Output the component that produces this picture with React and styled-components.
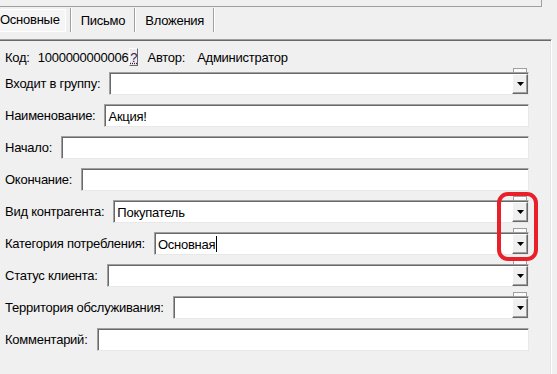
import React from 'react';
import styled, { createGlobalStyle } from 'styled-components';

const GlobalStyle = createGlobalStyle`
  body {
    margin: 0;
    background: #f0f0f0;
    font-family: "Liberation Sans", Arial, sans-serif;
    font-size: 13px;
    letter-spacing: -0.25px;
    color: #000;
  }
`;

const Window = styled.div`
  position: relative;
  width: 557px;
  height: 374px;
  overflow: hidden;
  background: #f0f0f0;
`;

const TopStrip = styled.div`
  width: 541px;
  height: 6px;
  border-bottom: 1px solid #a0a0a0;
  border-right: 1px solid #a0a0a0;
`;

const TabBar = styled.div`
  display: flex;
  height: 24px;
  margin: 1px 0 0 -6px;
`;

const Tab = styled.div`
  display: flex;
  align-items: center;
  padding: ${p => (p.$active ? '0 4px 0 0' : '0 9px 0 10px')};
  border-right: 1px solid #a0a0a0;
  box-shadow: 1px 0 0 #fff;
`;

const TabFace = styled.div`
  padding: 2px 5px 3px;
  border: 1px solid #fff;
  background: #f5f5f5;
  line-height: 16px;
`;

const Panel = styled.div`
  box-sizing: border-box;
  width: 552px;
  height: 335px;
  margin-top: 7px;
  padding: 6px 22px 0 5px;
  border-top: 1px solid #a0a0a0;
  border-right: 1px solid #fff;
  box-shadow: inset 0 1px 0 #696969, inset -1px 0 0 #e3e3e3;
`;

const MetaRow = styled.div`
  display: flex;
  align-items: center;
  height: 22px;
  margin-bottom: 4px;
  white-space: nowrap;
`;

const MetaLabel = styled.span`
  margin-right: ${p => p.$gap || 8}px;
  margin-left: ${p => p.$lead || 0}px;
`;

const HelpButton = styled.span`
  display: inline-flex;
  align-items: center;
  justify-content: center;
  box-sizing: border-box;
  width: 9px;
  height: 18px;
  margin: 0 0 0 1px;
  border: 1px solid;
  border-color: #fff #696969 #696969 #fff;
  background: #ececec;
  color: #3d1450;
  font-size: 13px;
  letter-spacing: 0;
  text-decoration: underline dotted;
`;

const Form = styled.div`
  display: flex;
  flex-direction: column;
  gap: 9px;
`;

const Row = styled.div`
  display: flex;
  align-items: center;
  height: 23px;
`;

const Label = styled.span`
  flex: none;
  white-space: nowrap;
  margin-right: 9px;
`;

const Field = styled.div`
  position: relative;
  flex: 1;
  display: flex;
  align-items: center;
  box-sizing: border-box;
  height: 23px;
  padding: ${p => (p.$combo ? '0 0 0 3px' : '0 3px')};
  background: #fff;
  border: 1px solid;
  border-color: #a0a0a0 #e8e8e8 #e8e8e8 #a0a0a0;
  box-shadow: inset 1px 1px 0 #696969;
`;

const Value = styled.span`
  flex: 1;
  display: flex;
  align-items: center;
  white-space: nowrap;
  padding-top: 1px;
`;

const Caret = styled.span`
  display: inline-block;
  width: 1px;
  height: 16px;
  margin-left: 1px;
  background: #000;
`;

const DropButton = styled.div`
  flex: none;
  display: flex;
  align-items: center;
  justify-content: center;
  box-sizing: border-box;
  width: 16px;
  height: 20px;
  margin: 1px 0 0 auto;
  background: #f0f0f0;
  border: 1px solid;
  border-color: #fff #696969 #696969 #fff;
  box-shadow: inset -1px -1px 0 #a0a0a0;
`;

const ComboTab = styled.div`
  position: absolute;
  top: -5px;
  right: 1px;
  width: 14px;
  height: 4px;
  box-sizing: border-box;
  border: 1px solid #a0a0a0;
  border-bottom: none;
  background: #fafafa;
`;

const Annotation = styled.div`
  position: absolute;
  left: 497px;
  top: 192px;
  width: 41px;
  height: 69px;
  box-sizing: border-box;
  border: 4px solid #e8202a;
  border-radius: 11px;
`;

function Arrow() {
  return (
    <svg width="7" height="4" viewBox="0 0 7 4">
      <polygon points="0,0 7,0 3.5,4" fill="#000" />
    </svg>
  );
}

function Combo({ value, caret }) {
  return (
    <Field $combo>
      <ComboTab />
      <Value>
        {value}
        {caret && <Caret />}
      </Value>
      <DropButton>
        <Arrow />
      </DropButton>
    </Field>
  );
}

const fields = [
  { label: 'Входит в группу:', combo: true },
  { label: 'Наименование:', value: 'Акция!' },
  { label: 'Начало:' },
  { label: 'Окончание:' },
  { label: 'Вид контрагента:', combo: true, value: 'Покупатель' },
  { label: 'Категория потребления:', combo: true, value: 'Основная', caret: true },
  { label: 'Статус клиента:', combo: true },
  { label: 'Территория обслуживания:', combo: true },
  { label: 'Комментарий:' },
];

export default function App() {
  return (
    <Window>
      <GlobalStyle />
      <TopStrip />
      <TabBar>
        <Tab $active>
          <TabFace>Основные</TabFace>
        </Tab>
        <Tab>Письмо</Tab>
        <Tab>Вложения</Tab>
      </TabBar>
      <Panel>
        <MetaRow>
          <MetaLabel>Код:</MetaLabel>
          <span>1000000000006</span>
          <HelpButton>?</HelpButton>
          <MetaLabel $lead={9} $gap={12}>Автор:</MetaLabel>
          <span>Администратор</span>
        </MetaRow>
        <Form>
          {fields.map(f => (
            <Row key={f.label}>
              <Label>{f.label}</Label>
              {f.combo ? (
                <Combo value={f.value} caret={f.caret} />
              ) : (
                <Field>
                  <Value>{f.value}</Value>
                </Field>
              )}
            </Row>
          ))}
        </Form>
      </Panel>
      <Annotation />
    </Window>
  );
}
